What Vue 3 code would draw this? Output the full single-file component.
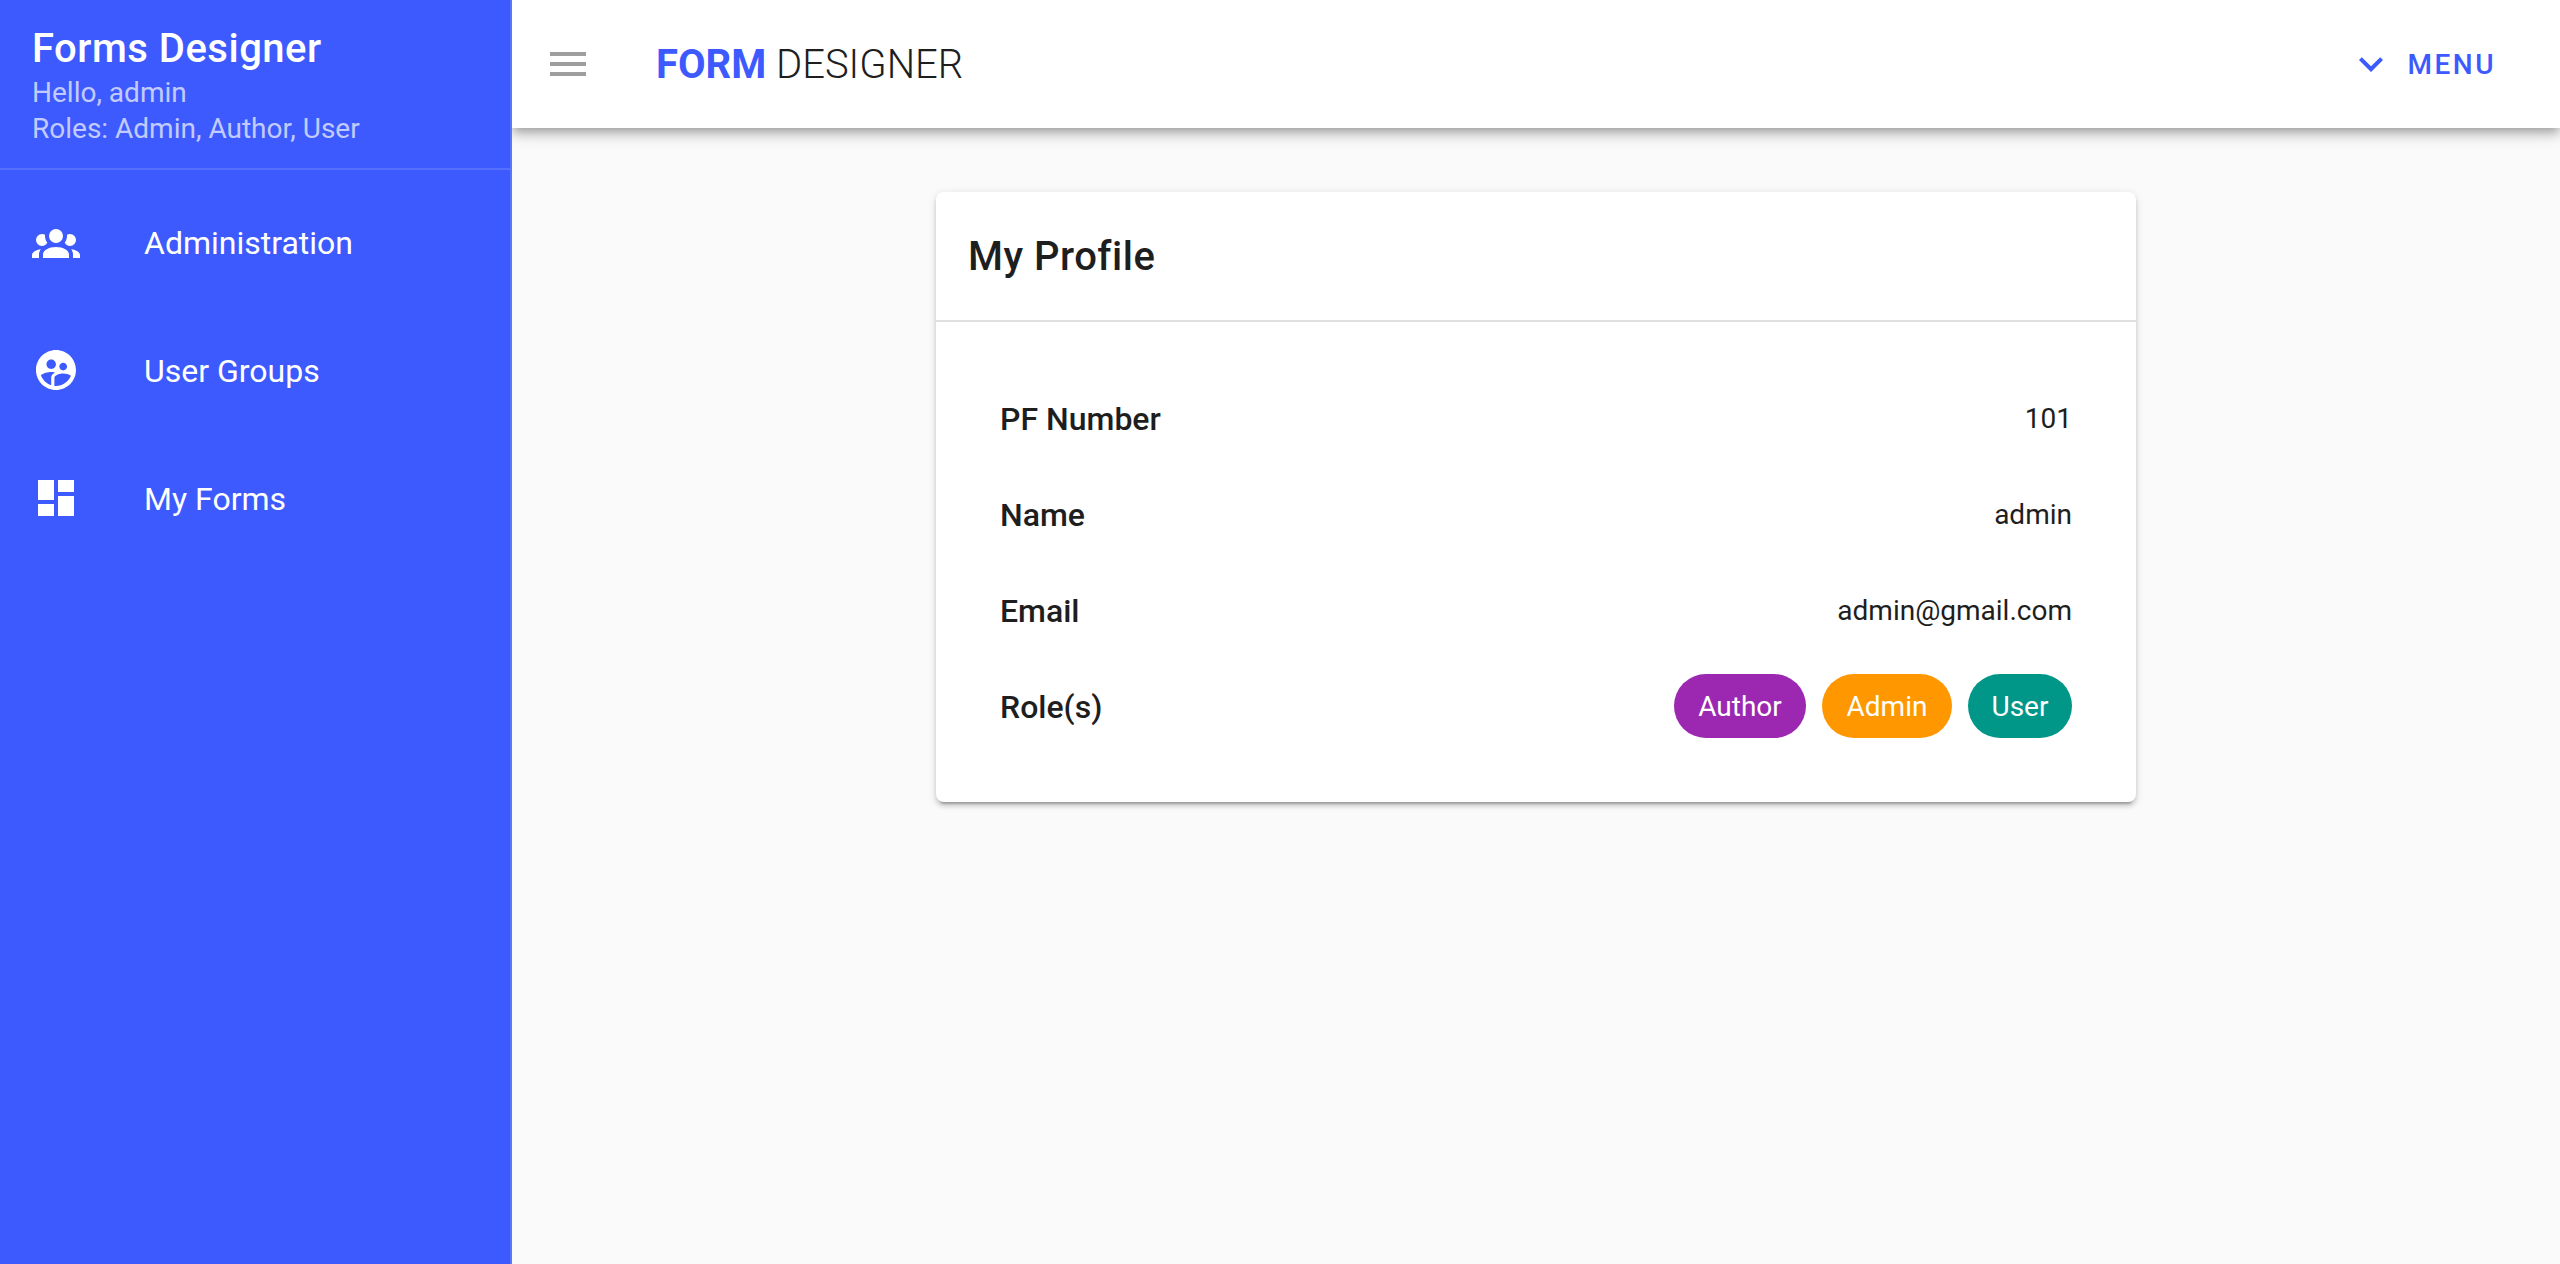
<script setup>
const navItems = [
  {
    label: 'Administration',
    path: 'M12,5.5A3.5,3.5 0 0,1 15.5,9A3.5,3.5 0 0,1 12,12.5A3.5,3.5 0 0,1 8.5,9A3.5,3.5 0 0,1 12,5.5M5,8C5.56,8 6.08,8.15 6.53,8.42C6.38,9.85 6.8,11.27 7.66,12.38C7.16,13.34 6.16,14 5,14A3,3 0 0,1 2,11A3,3 0 0,1 5,8M19,8A3,3 0 0,1 22,11A3,3 0 0,1 19,14C17.84,14 16.84,13.34 16.34,12.38C17.2,11.27 17.62,9.85 17.47,8.42C17.92,8.15 18.44,8 19,8M5.5,18.25C5.5,16.18 8.41,14.5 12,14.5C15.59,14.5 18.5,16.18 18.5,18.25V20H5.5V18.25M0,20V18.5C0,17.11 1.89,15.94 4.45,15.6C3.86,16.28 3.5,17.22 3.5,18.25V20H0M24,20H20.5V18.25C20.5,17.22 20.14,16.28 19.55,15.6C22.11,15.94 24,17.11 24,18.5V20Z',
  },
  {
    label: 'User Groups',
    path: 'M11.99 2c-5.52 0-10 4.48-10 10s4.48 10 10 10 10-4.48 10-10-4.48-10-10-10zm3.61 6.34c1.07 0 1.93.86 1.93 1.93 0 1.07-.86 1.93-1.93 1.93-1.07 0-1.93-.86-1.93-1.93-.01-1.07.86-1.93 1.93-1.93zm-6-1.58c1.3 0 2.36 1.06 2.36 2.36 0 1.3-1.06 2.36-2.36 2.36s-2.36-1.06-2.36-2.36c0-1.31 1.05-2.36 2.36-2.36zm0 9.13v3.75c-2.4-.75-4.3-2.6-5.14-4.96 1.05-1.12 3.67-1.69 5.14-1.69.53 0 1.2.08 1.9.22-1.64.87-1.9 2.02-1.9 2.68zM11.99 20c-.27 0-.53-.01-.79-.04v-4.07c0-1.42 2.94-2.13 4.4-2.13 1.07 0 2.92.39 3.84 1.15C18.28 17.88 15.39 20 11.99 20z',
  },
  {
    label: 'My Forms',
    path: 'M3 13h8V3H3v10zm0 8h8v-6H3v6zm10 0h8V11h-8v10zm0-18v6h8V3h-8z',
  },
]

const fields = [
  { label: 'PF Number', value: '101' },
  { label: 'Name', value: 'admin' },
  { label: 'Email', value: 'admin@gmail.com' },
]

const roles = [
  { name: 'Author', tone: 'purple' },
  { name: 'Admin', tone: 'orange' },
  { name: 'User', tone: 'teal' },
]
</script>

<template>
  <div class="app">
    <aside class="drawer">
      <header class="drawer-head">
        <div class="drawer-title">Forms Designer</div>
        <div class="drawer-sub">Hello, admin</div>
        <div class="drawer-sub">Roles: Admin, Author, User</div>
      </header>
      <nav class="nav">
        <a v-for="item in navItems" :key="item.label" class="nav-item">
          <svg class="icon" viewBox="0 0 24 24"><path :d="item.path" /></svg>
          <span class="nav-label">{{ item.label }}</span>
        </a>
      </nav>
    </aside>

    <div class="content">
      <header class="toolbar">
        <svg class="icon burger" viewBox="0 0 24 24">
          <path d="M3 18h18v-2H3v2zm0-5h18v-2H3v2zm0-7v2h18V6H3z" />
        </svg>
        <h1 class="brand"><b>FORM</b> <span>DESIGNER</span></h1>
        <button class="menu" type="button">
          <svg class="icon" viewBox="0 0 24 24">
            <path d="M7.41,8.58L12,13.17L16.59,8.58L18,10L12,16L6,10L7.41,8.58Z" />
          </svg>
          <span>MENU</span>
        </button>
      </header>

      <main class="main">
        <section class="card">
          <h2 class="card-title">My Profile</h2>
          <div class="card-body">
            <div v-for="field in fields" :key="field.label" class="row">
              <span class="label">{{ field.label }}</span>
              <span class="value">{{ field.value }}</span>
            </div>
            <div class="row">
              <span class="label">Role(s)</span>
              <div class="chips">
                <span v-for="role in roles" :key="role.name" class="chip" :class="role.tone">{{ role.name }}</span>
              </div>
            </div>
          </div>
        </section>
      </main>
    </div>
  </div>
</template>

<style>
body {
  margin: 0;
  overflow: hidden;
}
</style>

<style scoped>
.app {
  display: flex;
  height: 100vh;
  background: #fafafa;
  color: #1e1e1e;
  font-family: Roboto, 'Liberation Sans', sans-serif;
  font-size: 28px;
}

.icon {
  display: block;
  flex: none;
  width: 48px;
  height: 48px;
  fill: currentColor;
}

.drawer {
  position: relative;
  z-index: 2;
  box-sizing: border-box;
  flex: none;
  width: 512px;
  border-right: 2px solid #5a75ff;
  background: #3d5afe;
  color: #fff;
}

.drawer-head {
  box-sizing: border-box;
  height: 170px;
  padding: 24px 32px 0;
  border-bottom: 2px solid #5570fe;
}

.drawer-title {
  margin-bottom: 1px;
  font-size: 40px;
  font-weight: 500;
  line-height: 50px;
  letter-spacing: 0.5px;
}

.drawer-sub {
  line-height: 36px;
  color: rgba(255, 255, 255, 0.7);
}

.nav {
  padding-top: 8px;
}

.nav-item {
  display: flex;
  align-items: center;
  gap: 64px;
  height: 128px;
  padding: 0 32px;
  font-size: 32px;
}

.nav-label {
  padding-top: 2px;
}

.content {
  display: flex;
  flex: 1;
  flex-direction: column;
}

.toolbar {
  position: relative;
  z-index: 1;
  display: flex;
  align-items: center;
  box-sizing: border-box;
  flex: none;
  height: 128px;
  padding: 0 64px 0 32px;
  background: #fff;
  box-shadow: 0 4px 8px -2px rgba(0, 0, 0, 0.2), 0 8px 10px 0 rgba(0, 0, 0, 0.14),
    0 2px 20px 0 rgba(0, 0, 0, 0.12);
}

.burger {
  color: #9e9e9e;
}

.brand {
  flex: 1;
  margin: 0 0 0 64px;
  padding-top: 2px;
  font-size: 40px;
  font-weight: 300;
  line-height: 60px;
}

.brand b {
  font-weight: 700;
  color: #3d5afe;
}

.menu {
  display: flex;
  align-items: center;
  gap: 13px;
  padding: 0;
  border: 0;
  background: none;
  color: #3d5afe;
  font: 500 28px Roboto, sans-serif;
  letter-spacing: 2.5px;
}

.main {
  display: flex;
  justify-content: center;
  padding-top: 64px;
}

.card {
  width: 1200px;
  border-radius: 8px;
  background: #fff;
  box-shadow: 0 6px 2px -4px rgba(0, 0, 0, 0.2), 0 4px 4px 0 rgba(0, 0, 0, 0.14),
    0 2px 10px 0 rgba(0, 0, 0, 0.12);
}

.card-title {
  margin: 0;
  padding: 1px 32px 0;
  border-bottom: 2px solid #e0e0e0;
  font-size: 40px;
  font-weight: 500;
  line-height: 127px;
  letter-spacing: 0.5px;
}

.card-body {
  padding: 48px 64px;
}

.row {
  display: flex;
  align-items: center;
  justify-content: space-between;
  height: 96px;
}

.label {
  padding-top: 2px;
  font-size: 32px;
  font-weight: 500;
}

.chips {
  display: flex;
  gap: 16px;
}

.chip {
  box-sizing: border-box;
  height: 64px;
  padding-top: 1px;
  border-radius: 32px;
  color: #fff;
  line-height: 63px;
  text-align: center;
}

.purple {
  width: 132px;
  background: #9c27b0;
}

.orange {
  width: 130px;
  background: #ff9800;
}

.teal {
  width: 104px;
  background: #009688;
}
</style>
